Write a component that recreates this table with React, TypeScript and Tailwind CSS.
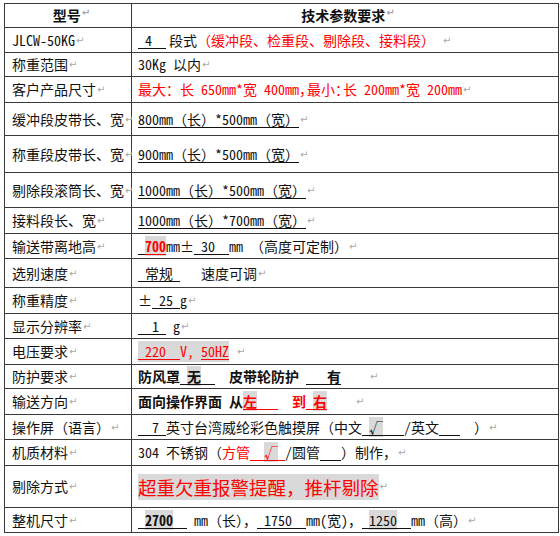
import type { ReactNode } from "react";

const RED = "text-[#ff0000]";

// Word's paragraph mark at the end of each cell
function Pm() {
  return (
    <span className="ml-[1px] text-[10px] text-[#a8a8a8] [font-family:'DejaVu_Sans',sans-serif]">↵</span>
  );
}

function U({ children, className = "" }: { children: ReactNode; className?: string }) {
  return (
    <span className={`whitespace-pre underline decoration-1 underline-offset-[2px] ${className}`}>
      {children}
    </span>
  );
}

function Hl({ children, className = "" }: { children: ReactNode; className?: string }) {
  return <span className={`whitespace-pre bg-[#d9d9d9] ${className}`}>{children}</span>;
}

function S({ children, className = "" }: { children: ReactNode; className?: string }) {
  return <span className={`whitespace-pre ${className}`}>{children}</span>;
}

// compressed full-width punctuation
function Np({ children }: { children: ReactNode }) {
  return <span className="tracking-[-6px]">{children}</span>;
}

interface Row {
  h: string;
  label: ReactNode;
  value: ReactNode;
}

const rows: Row[] = [
  {
    h: "h-[23px]",
    label: (
      <div className="flex w-full justify-center font-bold">
        <span>型号</span>
        <Pm />
      </div>
    ),
    value: (
      <div className="flex w-full justify-center font-bold">
        <span>技术参数要求</span>
        <Pm />
      </div>
    ),
  },
  {
    h: "h-[25px]",
    label: "JLCW-50KG",
    value: (
      <>
        <U>{" 4  "}</U>
        <span className="ml-[3px]">段式</span>
        <span className={RED}>（缓冲段、检重段、剔除段、接料段）</span>
        <S> </S>
      </>
    ),
  },
  { h: "h-[24px]", label: "称重范围", value: <S>30Kg 以内</S> },
  {
    h: "h-[26px]",
    label: "客户产品尺寸",
    value: (
      <S className={RED}>
        最大：长 650mm*宽 400mm<Np>，</Np>最小<Np>：</Np>长 200mm*宽 200mm
      </S>
    ),
  },
  { h: "h-[33px]", label: "缓冲段皮带长、宽", value: <U>800mm（长）*500mm（宽）</U> },
  { h: "h-[37px]", label: "称重段皮带长、宽", value: <U>900mm（长）*500mm（宽）</U> },
  { h: "h-[35px]", label: "剔除段滚筒长、宽", value: <U>1000mm（长）*500mm（宽）</U> },
  { h: "h-[26px]", label: "接料段长、宽", value: <U>1000mm（长）*700mm（宽）</U> },
  {
    h: "h-[25px]",
    label: "输送带离地高",
    value: (
      <>
        <U> </U>
        <U className={`${RED} font-bold`}>
          <Hl>700</Hl>
        </U>
        <S>mm±</S>
        <U>{" 30  "}</U>
        <S>mm （高度可定制）</S>
      </>
    ),
  },
  {
    h: "h-[29px]",
    label: "选别速度",
    value: (
      <>
        <U> 常规 </U>
        <S>{"   速度可调"}</S>
      </>
    ),
  },
  {
    h: "h-[26px]",
    label: "称重精度",
    value: (
      <>
        <span>±</span>
        <U> 25 </U>
        <span>g</span>
      </>
    ),
  },
  {
    h: "h-[25px]",
    label: "显示分辨率",
    value: (
      <>
        <U>{"  1 "}</U>
        <S> g</S>
      </>
    ),
  },
  {
    h: "h-[26px]",
    label: "电压要求",
    value: (
      <>
        <Hl className={RED}>
          <U> 220  </U>V, <U>50HZ</U>
        </Hl>
        <S> </S>
      </>
    ),
  },
  {
    h: "h-[24px]",
    label: "防护要求",
    value: (
      <span className="font-bold">
        防风罩
        <U>
          {" "}
          <Hl>无</Hl>
          {"  "}
        </U>
        <S>{"  皮带轮防护 "}</S>
        <U>{"   有"}</U>
        <S>{"    "}</S>
      </span>
    ),
  },
  {
    h: "h-[26px]",
    label: "输送方向",
    value: (
      <span className="font-bold">
        面向操作界面 从
        <U className={RED}>
          <Hl>左</Hl>
          {"   "}
        </U>
        <S className={RED}>{"  到"}</S>
        <U className={RED}>
          {" "}
          <Hl>右</Hl>
        </U>
        <S>{"    "}</S>
      </span>
    ),
  },
  {
    h: "h-[25px]",
    label: "操作屏（语言）",
    value: (
      <>
        <U>{"  7 "}</U>
        <span>英寸台湾威纶彩色触摸屏（中文</span>
        <U>
          {" "}
          <Hl>√</Hl>
          {"   "}
        </U>
        <span>/英文</span>
        <U>{"   "}</U>
        <S>{"  ）"}</S>
      </>
    ),
  },
  {
    h: "h-[26px]",
    label: "机质材料",
    value: (
      <>
        <S>304 不锈钢（</S>
        <span className={RED}>方管</span>
        <U className={RED}>
          {"  "}
          <Hl>√</Hl>
          {" "}
        </U>
        <span>/圆管</span>
        <U>{"   "}</U>
        <span>）制作，</span>
      </>
    ),
  },
  {
    h: "h-[42px]",
    label: "剔除方式",
    value: (
      <Hl className={`${RED} text-[18.5px] leading-[26px]`}>超重欠重报警提醒，推杆剔除</Hl>
    ),
  },
  {
    h: "h-[25px]",
    label: "整机尺寸",
    value: (
      <>
        <U className="font-bold">
          {" "}
          <Hl>2700</Hl>
          {"  "}
        </U>
        <S> mm（长），</S>
        <U>{" 1750  "}</U>
        <S>mm(宽)，</S>
        <U>
          {" "}
          <Hl>1250</Hl>
          {"  "}
        </U>
        <span>mm（高）</span>
      </>
    ),
  },
];

export default function App() {
  return (
    <div className="min-h-[536px] w-[560px] bg-white pl-[4px] pt-[3px] text-[14px] text-[#111] [font-family:'Noto_Sans_Mono_CJK_SC','Liberation_Serif','Noto_Sans_CJK_SC',serif]">
      <div className="w-[555px] border border-[#3a3a3a]">
        {rows.map((row, i) => (
          <div key={i} className={`flex ${row.h} ${i > 0 ? "border-t border-[#3a3a3a]" : ""}`}>
            <div className="flex w-[127px] shrink-0 items-center whitespace-nowrap border-r border-[#3a3a3a] pl-[7px]">
              {typeof row.label === "string" ? (
                <>
                  <span>{row.label}</span>
                  <Pm />
                </>
              ) : (
                row.label
              )}
            </div>
            <div className="flex flex-1 items-center whitespace-nowrap pl-[6px]">
              {i === 0 ? (
                row.value
              ) : (
                <>
                  <span className="flex items-center">{row.value}</span>
                  <Pm />
                </>
              )}
            </div>
          </div>
        ))}
      </div>
    </div>
  );
}
